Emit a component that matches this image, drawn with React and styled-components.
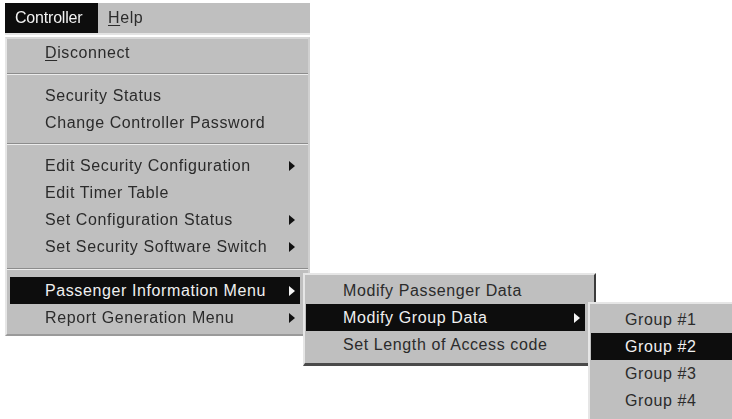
import React from "react";
import styled, { createGlobalStyle } from "styled-components";

const GlobalStyle = createGlobalStyle`
  html, body {
    margin: 0;
    padding: 0;
    background: #ffffff;
    overflow: hidden;
  }
  body {
    font-family: "Liberation Sans", Arial, sans-serif;
  }
`;

const GRAY = "#bfbfbf";

function Arrow({ light }) {
  return <ArrowShape $light={light} />;
}

function MenuItem({ label, highlighted, arrow, children }) {
  return (
    <Item $highlighted={highlighted}>
      <Label>{label}</Label>
      {arrow && <Arrow light={highlighted} />}
      {children}
    </Item>
  );
}

function App() {
  return (
    <Page>
      <GlobalStyle />
      <MenuBar>
        <BarItem $active>Controller</BarItem>
        <BarItem>
          <u>H</u>elp
        </BarItem>
      </MenuBar>

      <Dropdown>
        <MenuItem
          label={
            <>
              <u>D</u>isconnect
            </>
          }
        />
        <Separator />
        <MenuItem label="Security Status" />
        <MenuItem label="Change Controller Password" />
        <Separator />
        <MenuItem label="Edit Security Configuration" arrow />
        <MenuItem label="Edit Timer Table" />
        <MenuItem label="Set Configuration Status" arrow />
        <MenuItem label="Set Security Software Switch" arrow />
        <Separator $tall />
        <MenuItem label="Passenger Information Menu" arrow highlighted>
          <SubMenu>
            <SubItem>
              <Label>Modify Passenger Data</Label>
            </SubItem>
            <SubItem $highlighted>
              <Label>Modify Group Data</Label>
              <Arrow light />
              <GroupMenu>
                <GroupItem>Group #1</GroupItem>
                <GroupItem $highlighted>Group #2</GroupItem>
                <GroupItem>Group #3</GroupItem>
                <GroupItem>Group #4</GroupItem>
              </GroupMenu>
            </SubItem>
            <SubItem>
              <Label>Set Length of Access code</Label>
            </SubItem>
          </SubMenu>
        </MenuItem>
        <MenuItem label="Report Generation Menu" arrow />
      </Dropdown>
    </Page>
  );
}

const Page = styled.div`
  padding: 3px 0 0 5px;
  width: 732px;
  height: 419px;
  box-sizing: border-box;
  font: 400 16px "Liberation Sans", Arial, sans-serif;
  letter-spacing: 0.6px;
  color: #2b2b2b;
  filter: blur(0.4px);
`;

const MenuBar = styled.div`
  display: flex;
  align-items: stretch;
  width: 305px;
  height: 32px;
  background: ${GRAY};
  border-bottom: 2px solid #e4e4e4;
  box-sizing: border-box;
`;

const BarItem = styled.div`
  display: flex;
  align-items: center;
  padding: 0 10px;
  width: ${(p) => (p.$active ? "93px" : "auto")};
  box-sizing: border-box;
  background: ${(p) => (p.$active ? "#0d0d0d" : "transparent")};
  color: ${(p) => (p.$active ? "#f2f2f2" : "#2b2b2b")};
  letter-spacing: ${(p) => (p.$active ? "-0.2px" : "0.6px")};

  u {
    text-decoration-thickness: 1px;
    text-underline-offset: 2px;
  }
`;

const Dropdown = styled.div`
  display: flex;
  flex-direction: column;
  width: 305px;
  margin-top: 2px;
  padding: 0 8px 3px 3px;
  box-sizing: border-box;
  background: ${GRAY};
  border-left: 2px solid #e6e6e6;
  border-top: 2px solid #d8d8d8;
  border-right: 2px solid #d0d0d0;
  border-bottom: 2px solid #9a9a9a;
`;

const Item = styled.div`
  position: relative;
  display: flex;
  align-items: center;
  height: 27px;
  padding: 0 5px 0 35px;
  background: ${(p) => (p.$highlighted ? "#0d0d0d" : "transparent")};
  color: ${(p) => (p.$highlighted ? "#f0f0f0" : "#2b2b2b")};

  u {
    text-decoration-thickness: 1px;
    text-underline-offset: 2px;
  }
`;

const Label = styled.span`
  flex: 1;
  white-space: nowrap;
`;

const ArrowShape = styled.span`
  width: 0;
  height: 0;
  border-top: 5px solid transparent;
  border-bottom: 5px solid transparent;
  border-left: 6px solid ${(p) => (p.$light ? "#f4f4f4" : "#111111")};
`;

const Separator = styled.div`
  height: ${(p) => (p.$tall ? "17px" : "16px")};
  display: flex;
  align-items: center;
  margin: 0 -8px 0 -3px;

  &::before {
    content: "";
    flex: 1;
    height: 0;
    border-top: 1px solid #8c8c8c;
    border-bottom: 1px solid #ececec;
  }
`;

const SubMenu = styled.div`
  position: absolute;
  left: 100%;
  margin-left: 3px;
  top: -4px;
  z-index: 2;
  width: 293px;
  padding: 2px 9px 5px 1px;
  box-sizing: border-box;
  background: ${GRAY};
  border-left: 2px solid #e6e6e6;
  border-top: 2px solid #e6e6e6;
  border-right: 2px solid #3c3c3c;
  border-bottom: 3px solid #4a4a4a;
  color: #2b2b2b;
`;

const SubItem = styled(Item)`
  padding: 0 5px 0 37px;
`;

const GroupMenu = styled.div`
  position: absolute;
  left: 100%;
  margin-left: 3px;
  top: -2px;
  z-index: 3;
  width: 160px;
  padding: 2px 0 5px 1px;
  box-sizing: border-box;
  background: ${GRAY};
  border-left: 2px solid #e6e6e6;
  border-top: 2px solid #e6e6e6;
  color: #2b2b2b;
`;

const GroupItem = styled.div`
  display: flex;
  align-items: center;
  height: 27px;
  padding-left: 34px;
  white-space: nowrap;
  background: ${(p) => (p.$highlighted ? "#0d0d0d" : "transparent")};
  color: ${(p) => (p.$highlighted ? "#f0f0f0" : "#2b2b2b")};
`;

export default App;
